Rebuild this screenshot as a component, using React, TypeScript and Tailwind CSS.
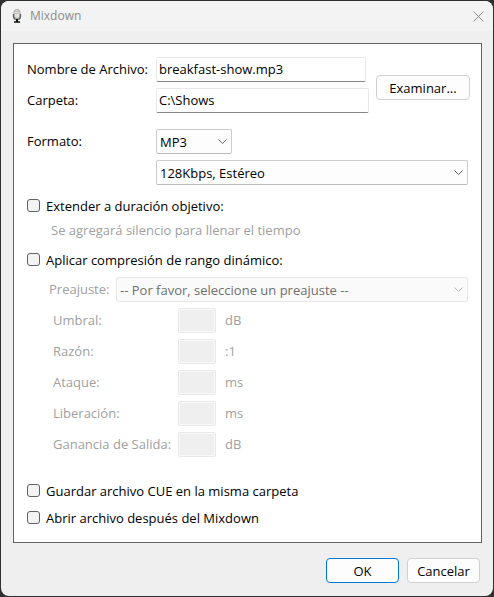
import type { ReactNode } from "react";

const levels = [
  { id: "threshold", label: "Umbral:", unit: "dB" },
  { id: "ratio", label: "Razón:", unit: ":1" },
  { id: "attack", label: "Ataque:", unit: "ms" },
  { id: "release", label: "Liberación:", unit: "ms" },
  { id: "gain", label: "Ganancia de Salida:", unit: "dB" },
];

const fieldLabel = "shrink-0 pb-0.5";

const textField =
  "block h-[25px] min-w-0 rounded-xs border border-[#e8e8e8] border-b-[#868686] bg-white px-0.5 pb-0.5 outline-none";

const button =
  "h-[25px] shrink-0 rounded border border-[#d0d0d0] bg-[#fdfdfd] text-center";

function MicrophoneIcon() {
  return (
    <svg width="10" height="15" viewBox="0 0 10 15" fill="none" aria-hidden="true">
      <rect x="2" y="0.5" width="6" height="9" rx="3" fill="#e2e2e2" stroke="#a0a0a0" />
      <path d="M3 2.5h4M3 4.5h4" stroke="#bcbcbc" />
      <path d="M1.5 5v2.5a3.5 3 0 0 0 7 0V5" stroke="#555" strokeWidth="1.2" />
      <path d="M5 10v3" stroke="#111" strokeWidth="2" />
      <path d="M2 13h6" stroke="#111" strokeWidth="1.4" />
    </svg>
  );
}

function Dropdown({ id, text, label, disabled }: { id: string; text: string; label?: string; disabled?: boolean }) {
  return (
    <div className="relative">
      <select
        id={id}
        aria-label={label}
        disabled={disabled}
        className="block h-[25px] w-full appearance-none rounded-xs border border-[#cccccc] border-b-[#bbbbbb] bg-[#fdfdfd] pr-5 pl-[3px] text-black opacity-100 outline-none disabled:border-[#e8e8e8] disabled:bg-[#fafafa] disabled:text-[#6f6f6f]"
      >
        <option>{text}</option>
      </select>
      <svg
        className={`pointer-events-none absolute top-2.5 right-[5px] ${disabled ? "text-[#b4b4b4]" : "text-[#606060]"}`}
        width="9"
        height="5"
        viewBox="0 0 9 5"
        fill="none"
        stroke="currentColor"
        aria-hidden="true"
      >
        <path d="M0.5 0.5l4 4 4-4" />
      </svg>
    </div>
  );
}

function Check({ children }: { children: ReactNode }) {
  return (
    <label className="flex h-5 w-fit items-center gap-1.5">
      <input
        type="checkbox"
        className="mb-0.5 size-[13px] appearance-none rounded-[3px] border border-[#626262] bg-[#f3f3f3] checked:bg-[#0067c0]"
      />
      {children}
    </label>
  );
}

export default function App() {
  return (
    <div className="min-h-screen bg-[#303030] p-px font-['Open_Sans','Segoe_UI',sans-serif] text-[13px] leading-5 text-black">
      <div className="overflow-hidden rounded-lg bg-[#efefef]">
        <header className="flex h-[30px] items-center bg-[#f3f3f3] pr-2 pl-[11px] text-[12px] text-[#8c8c8c]">
          <MicrophoneIcon />
          <h1 className="ml-2 flex-1">Mixdown</h1>
          <button type="button" aria-label="Cerrar" className="p-px">
            <svg width="11" height="11" viewBox="0 0 11 11" stroke="#8c8c8c" aria-hidden="true">
              <path d="M0.5 0.5l10 10M10.5 0.5l-10 10" />
            </svg>
          </button>
        </header>

        <form onSubmit={(event) => event.preventDefault()} className="px-3 pt-3 pb-[13px]">
          <div className="mr-[-1px] border border-[#646464] bg-white px-[13px] pt-[13px] pb-3.5">
            <div className="mr-[-2px] flex gap-[7px]">
              <div className="flex flex-1 flex-col gap-1.5">
                <div className="flex items-center pr-[3px]">
                  <label htmlFor="filename" className={`${fieldLabel} w-[129px]`}>Nombre de Archivo:</label>
                  <input id="filename" defaultValue="breakfast-show.mp3" className={`${textField} flex-1`} />
                </div>
                <div className="flex items-center">
                  <label htmlFor="folder" className={`${fieldLabel} w-[129px]`}>Carpeta:</label>
                  <input id="folder" defaultValue="C:\Shows" className={`${textField} flex-1`} />
                </div>
              </div>
              <button type="button" className={`${button} mt-[18px] w-[94px]`}>Examinar...</button>
            </div>

            <div className="mt-4 grid grid-cols-[129px_1fr] items-center gap-y-1.5">
              <label htmlFor="format" className={fieldLabel}>Formato:</label>
              <div className="w-[76px]">
                <Dropdown id="format" text="MP3" />
              </div>
              <div className="col-start-2">
                <Dropdown id="quality" text="128Kbps, Estéreo" label="Calidad" />
              </div>
            </div>

            <div className="mt-[11px]">
              <Check>Extender a duración objetivo:</Check>
            </div>
            <p className="mt-1 ml-6 text-[#a0a0a0]">Se agregará silencio para llenar el tiempo</p>

            <div className="mt-2.5">
              <Check>Aplicar compresión de rango dinámico:</Check>
            </div>
            <fieldset disabled className="mt-[7px] text-[#a0a0a0]">
              <div className="grid grid-cols-[67px_1fr] items-center pl-[22px]">
                <label htmlFor="preset" className={fieldLabel}>Preajuste:</label>
                <Dropdown id="preset" text="-- Por favor, seleccione un preajuste --" disabled />
              </div>
              <div className="mt-1.5 flex flex-col gap-1.5">
                {levels.map((level) => (
                  <div key={level.id} className="flex items-center pl-[26px]">
                    <label htmlFor={level.id} className={`${fieldLabel} w-[125px]`}>{level.label}</label>
                    <input
                      id={level.id}
                      className="block h-[25px] w-[38px] rounded-xs border border-[#e8e8e8] bg-[#efefef] px-1 inset-ring inset-ring-[#fafafa]"
                    />
                    <span className="ml-[9px] pb-0.5">{level.unit}</span>
                  </div>
                ))}
              </div>
            </fieldset>

            <div className="mt-6 flex flex-col gap-[7px]">
              <Check>Guardar archivo CUE en la misma carpeta</Check>
              <Check>Abrir archivo después del Mixdown</Check>
            </div>
          </div>

          <div className="mt-[15px] flex justify-end gap-2 pr-px">
            <button type="submit" className="h-[25px] w-[73px] rounded border border-[#0078d4] bg-[#fdfdfd]">OK</button>
            <button type="button" className={`${button} w-[73px]`}>Cancelar</button>
          </div>
        </form>
      </div>
    </div>
  );
}
